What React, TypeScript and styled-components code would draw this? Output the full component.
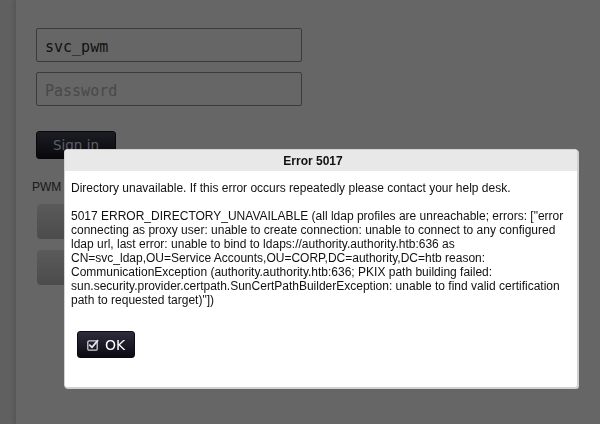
import React from "react";
import styled, { createGlobalStyle } from "styled-components";

const Global = createGlobalStyle`
  html, body { margin: 0; padding: 0; }
  body {
    background: #f0f0f0;
    font-family: "Liberation Sans", Arial, sans-serif;
    overflow: hidden;
  }
`;

const Page = styled.div`
  width: 600px;
  height: 424px;
  display: flex;
`;

const Gutter = styled.div`
  width: 16px;
  flex: none;
  background: #efefef;
`;

const Main = styled.main`
  flex: 1;
  background: #ffffff;
  box-shadow: -2px 0 4px rgba(0, 0, 0, 0.12);
  padding: 28px 0 0 16px;
  display: flex;
  flex-direction: column;
`;

const Form = styled.form`
  display: flex;
  flex-direction: column;
  align-items: flex-start;
  padding-left: 4px;
`;

const Input = styled.input`
  box-sizing: border-box;
  width: 266px;
  height: 34px;
  margin: 0 0 10px;
  padding: 3px 8px 0;
  border: 1px solid #959595;
  border-radius: 2px;
  background: #fff;
  color: #303030;
  font-family: "DejaVu Sans Mono", monospace;
  font-size: 15px;
  line-height: 22px;
  outline: none;
  &::placeholder {
    color: #b4b4b4;
  }
`;

const SignIn = styled.button`
  margin-top: 15px;
  width: 80px;
  height: 28px;
  border: 1px solid #15151f;
  border-radius: 3px;
  background: linear-gradient(#48485a, #14141f);
  color: #dfeaff;
  font-family: "DejaVu Sans", sans-serif;
  font-size: 13.5px;
  padding: 0;
`;

const Label = styled.div`
  margin-top: 21px;
  font-size: 12px;
  line-height: 14px;
  color: #444;
`;

const Actions = styled.div`
  margin-top: 10px;
  padding-left: 5px;
  display: flex;
  flex-direction: column;
  gap: 11px;
`;

const ActionButton = styled.div`
  width: 262px;
  height: 35px;
  border-radius: 4px;
  background: linear-gradient(#e2e2e2, #bcbcbc);
`;

const Overlay = styled.div`
  position: fixed;
  inset: 0;
  background: rgba(0, 0, 0, 0.6);
`;

const Dialog = styled.div`
  position: fixed;
  left: 64px;
  top: 149px;
  width: 512px;
  background: #fff;
  border: 1px solid #d2d2d2;
  border-radius: 3px;
  box-shadow: 1px 1px 0 #cfcfcf;
  overflow: hidden;
`;

const TitleBar = styled.div`
  height: 21px;
  background: #e8e8e8;
  display: flex;
  align-items: center;
  justify-content: center;
  padding-right: 16px;
  font-weight: bold;
  font-size: 12px;
  color: #111;
`;

const Body = styled.div`
  padding: 10px 6px 29px 6px;
`;

const Message = styled.div`
  font-size: 12px;
  line-height: 14px;
  color: #111;
`;

const OkButton = styled.button`
  margin: 24px 0 0 6px;
  height: 27px;
  padding: 0 9px 0 9px;
  display: inline-flex;
  align-items: center;
  gap: 6px;
  border: 1px solid #0c0a14;
  border-radius: 3px;
  background: linear-gradient(#2e2c3c, #0b0a13);
  color: #fff;
  font-family: "DejaVu Sans", sans-serif;
  font-size: 14px;
`;

const CheckIcon = () => (
  <svg width="12" height="12" viewBox="0 0 12 12" fill="none">
    <rect x="0.8" y="1.8" width="9.4" height="9.4" rx="1.3" stroke="#cfcfd6" strokeWidth="1.3" />
    <path d="M2.8 6.2 L5 8.4 L10.6 1.6" stroke="#e4e4ea" strokeWidth="1.8" strokeLinecap="round" strokeLinejoin="round" />
  </svg>
);

export default function App() {
  return (
    <>
      <Global />
      <Page>
        <Gutter />
        <Main>
          <Form>
            <Input defaultValue="svc_pwm" />
            <Input type="password" placeholder="Password" />
            <SignIn type="button">Sign in</SignIn>
          </Form>
          <Label>PWM</Label>
          <Actions>
            <ActionButton />
            <ActionButton />
          </Actions>
        </Main>
      </Page>
      <Overlay />
      <Dialog>
        <TitleBar>Error 5017</TitleBar>
        <Body>
          <Message>
            Directory unavailable. If this error occurs repeatedly please contact your help desk.
            <br />
            <br />
            5017 ERROR_DIRECTORY_UNAVAILABLE (all ldap profiles are unreachable; errors: ["error
            connecting as proxy user: unable to create connection: unable to connect to any configured
            ldap url, last error: unable to bind to ldaps://authority.authority.htb:636 as
            CN=svc_ldap,OU=Service Accounts,OU=CORP,DC=authority,DC=htb reason:
            CommunicationException (authority.authority.htb:636; PKIX path building failed:
            sun.security.provider.certpath.SunCertPathBuilderException: unable to find valid
            certification path to requested target)"])
          </Message>
          <OkButton type="button">
            <CheckIcon />
            OK
          </OkButton>
        </Body>
      </Dialog>
    </>
  );
}
